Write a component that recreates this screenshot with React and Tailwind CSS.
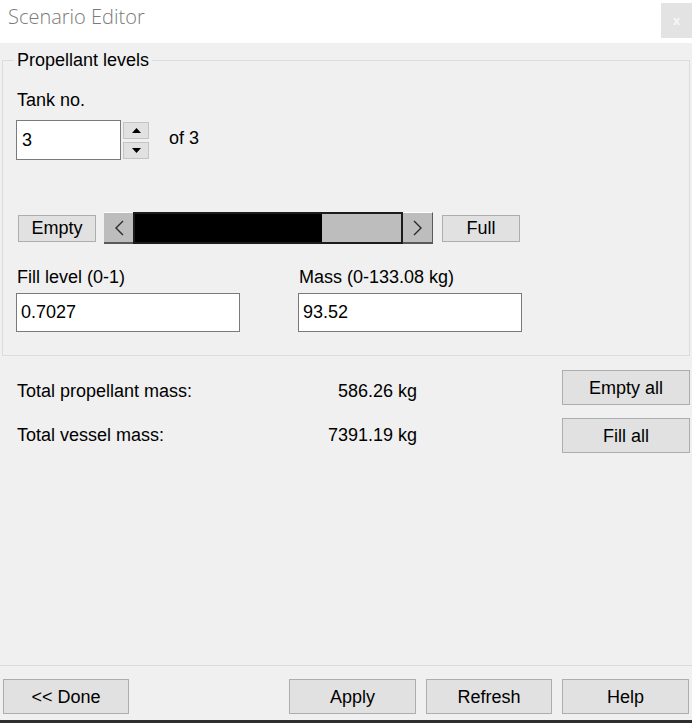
import React from 'react';

const font = { fontFamily: '"Liberation Sans", Arial, sans-serif' };

const WinButton = ({ children, className = '' }) => (
    <button
        className={`flex items-center justify-center bg-[#e1e1e1] border border-[#adadad] text-[18px] leading-none text-black ${className}`}
    >
        {children}
    </button>
);

const Chevron = ({ dir }) => (
    <svg width="12" height="16" viewBox="0 0 12 16">
        {dir === 'left' ? (
            <polyline points="10,1 3,8 10,15" fill="none" stroke="#2a2a2a" strokeWidth="1.4" />
        ) : (
            <polyline points="2,1 9,8 2,15" fill="none" stroke="#2a2a2a" strokeWidth="1.4" />
        )}
    </svg>
);

const Triangle = ({ up }) => (
    <svg width="9" height="5" viewBox="0 0 9 5">
        <polygon points={up ? '4.5,0 9,5 0,5' : '0,0 9,0 4.5,5'} fill="#000" />
    </svg>
);

const App = () => {
    return (
        <div className="w-[692px] h-[723px] flex flex-col bg-[#f0f0f0] overflow-hidden" style={font}>
            {/* Title bar */}
            <div className="h-[43px] bg-white flex items-start justify-between shrink-0">
                <div
                    className="pl-[8px] pt-[3px] text-[20px] leading-[27px] font-light text-[#7a7a7a]"
                    style={{ fontFamily: '"Open Sans", sans-serif' }}
                >
                    Scenario Editor
                </div>
                <div className="mt-[3px] w-[31px] h-[35px] bg-[#e3e3e3] flex items-center justify-center text-[13px] text-[#f7f7f7] font-bold">
                    x
                </div>
            </div>

            {/* Main content */}
            <div className="flex-1 flex flex-col">
                <fieldset className="mt-[7px] mx-[2px] border border-[#dcdcdc] pl-[14px] pb-[23px]">
                    <legend className="-ml-[3px] px-[3px] text-[18px] leading-[20px] text-black">Propellant levels</legend>

                    <div className="pt-[20px] text-[18px] leading-[20px] text-black">Tank no.</div>

                    <div className="mt-[10px] flex items-center">
                        <div className="-ml-[1px] w-[105px] h-[40px] bg-white border border-[#7a7a7a] flex items-center pl-[5px] text-[18px] text-black">
                            3
                        </div>
                        <div className="ml-[2px] flex flex-col gap-[3px]">
                            <div className="w-[26px] h-[17px] bg-[#e1e1e1] border border-[#c4c4c4] flex items-center justify-center">
                                <Triangle up />
                            </div>
                            <div className="w-[26px] h-[17px] bg-[#e1e1e1] border border-[#c4c4c4] flex items-center justify-center">
                                <Triangle />
                            </div>
                        </div>
                        <div className="ml-[20px] -mt-[3px] text-[18px] text-black">of 3</div>
                    </div>

                    {/* Slider row */}
                    <div className="mt-[52px] h-[32px] flex items-center">
                        <WinButton className="ml-[1px] w-[78px] h-[27px]">Empty</WinButton>
                        <div className="ml-[8px] w-[329px] h-[32px] flex">
                            <div className="w-[29px] h-full bg-[#bdbdbd] border-t border-t-white border-b-2 border-b-[#5a5a5a] flex items-center justify-center">
                                <Chevron dir="left" />
                            </div>
                            <div className="flex-1 h-full flex border-2 border-[#1c1c1c] bg-black">
                                <div className="flex-1 bg-black" />
                                <div className="w-[79px] h-full bg-[#bdbdbd]" />
                            </div>
                            <div className="w-[30px] h-full bg-[#bdbdbd] border-t border-t-white border-b-2 border-b-[#5a5a5a] border-r border-r-[#5a5a5a] flex items-center justify-center">
                                <Chevron dir="right" />
                            </div>
                        </div>
                        <WinButton className="ml-[9px] w-[78px] h-[27px]">Full</WinButton>
                    </div>

                    {/* Fill level / mass */}
                    <div className="mt-[23px] grid grid-cols-[224px_224px] gap-x-[58px] -ml-[1px]">
                        <div className="pl-[1px] text-[18px] leading-[20px] text-black">Fill level (0-1)</div>
                        <div className="pl-[1px] text-[18px] leading-[20px] text-black">Mass (0-133.08 kg)</div>
                        <div className="mt-[6px] h-[39px] bg-white border border-[#7a7a7a] flex items-center pl-[4px] text-[18px] text-black">
                            0.7027
                        </div>
                        <div className="mt-[6px] h-[39px] bg-white border border-[#7a7a7a] flex items-center pl-[4px] text-[18px] text-black">
                            93.52
                        </div>
                    </div>
                </fieldset>

                {/* Totals */}
                <div className="mt-[14px] flex">
                    <div className="ml-[17px] w-[400px] flex flex-col text-[18px] text-black">
                        <div className="h-[35px] pt-[7px] flex items-center justify-between">
                            <span>Total propellant mass:</span>
                            <span>586.26 kg</span>
                        </div>
                        <div className="mt-[13px] h-[35px] flex items-center justify-between">
                            <span>Total vessel mass:</span>
                            <span>7391.19 kg</span>
                        </div>
                    </div>
                    <div className="ml-auto mr-[2px] flex flex-col gap-[13px]">
                        <WinButton className="w-[128px] h-[35px]">Empty all</WinButton>
                        <WinButton className="w-[128px] h-[35px]">Fill all</WinButton>
                    </div>
                </div>
            </div>

            {/* Footer */}
            <div className="h-[1px] bg-[#dadada] shrink-0" />
            <div className="mt-[13px] h-[35px] flex shrink-0">
                <WinButton className="ml-[3px] w-[126px] h-[35px]">&lt;&lt; Done</WinButton>
                <div className="ml-auto mr-[3px] flex gap-[10px]">
                    <WinButton className="w-[127px] h-[35px]">Apply</WinButton>
                    <WinButton className="w-[126px] h-[35px]">Refresh</WinButton>
                    <WinButton className="w-[127px] h-[35px]">Help</WinButton>
                </div>
            </div>
            <div className="mt-[6px] h-[3px] bg-[#2e2e2e] shrink-0" />
        </div>
    );
};

export default App;
